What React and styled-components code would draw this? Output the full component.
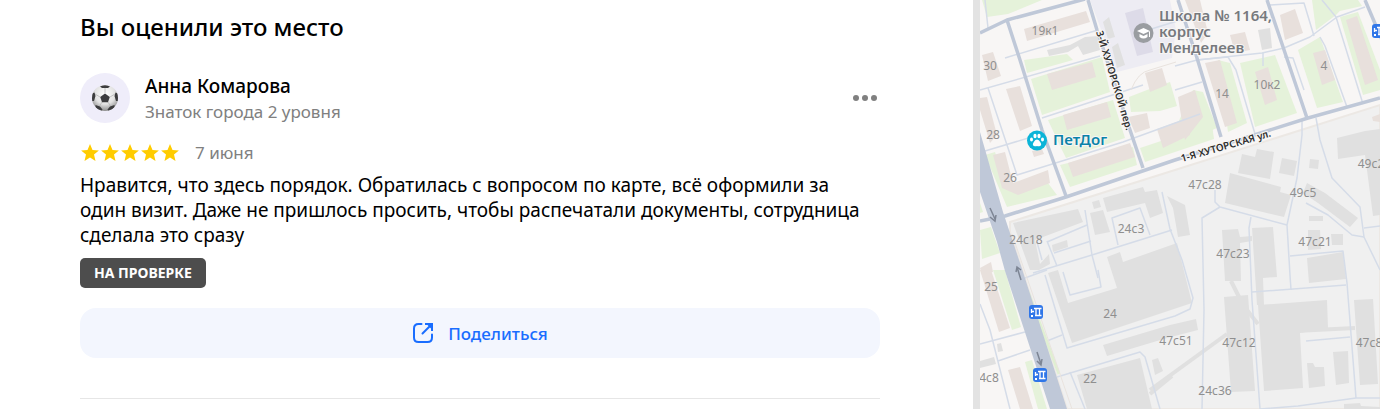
import React from 'react';
import styled, { createGlobalStyle } from 'styled-components';

const review = {
  author: 'Анна Комарова',
  level: 'Знаток города 2 уровня',
  date: '7 июня',
  rating: 5,
  text: 'Нравится, что здесь порядок. Обратилась с вопросом по карте, всё оформили за один визит. Даже не пришлось просить, чтобы распечатали документы, сотрудница сделала это сразу',
  status: 'На проверке',
};

// map shapes, grouped by fill
const greens = [
  '982,0 1042,0 1008,14 987,17',
  '1024,60 1067,54 1073,60 1027,73',
  '1031,79 1102,57 1110,92 1042,115',
  '1048,120 1113,100 1125,138 1066,158 1060,146',
  '1129,97 1147,90 1170,82 1177,106 1160,111 1131,112',
  '985,155 995,152 1007,188 1048,183 1057,195 1007,207',
  '1060,165 1133,147 1137,165 1070,187',
  '1140,148 1212,124 1214,139 1145,162',
  '1193,90 1203,92 1217,128 1176,145 1172,136',
  '1218,60 1230,63 1247,123 1228,132',
  '1240,63 1275,55 1297,113 1255,127',
  '1298,50 1320,37 1343,102 1317,108',
  '1340,17 1358,12 1380,70 1380,90 1363,95',
  '1312,0 1335,0 1350,0 1336,15 1316,30',
  '1338,0 1358,0 1362,6 1340,11',
  '980,230 991,227 1000,253 982,259',
  '993,270 1005,270 1021,327 1012,330',
  '1025,362 1032,360 1047,409 1038,409',
  '980,203 983,212 980,213',
];

const houses = [
  '1024,29 1086,11 1090,22 1027,41',
  '982,55 993,52 1001,76 988,81',
  '980,98 987,97 997,135 990,143 980,110',
  '1006,89 1020,86 1032,126 1020,131',
  '1047,74 1092,62 1096,77 1052,90',
  '1063,115 1107,102 1111,117 1067,130',
  '1128,117 1147,113 1150,128 1135,133',
  '1145,73 1162,68 1167,85 1150,92',
  '1157,129 1185,119 1190,135 1163,148',
  '993,155 1005,152 1013,183 1048,170 1050,183 1018,195 1002,188',
  '1032,151 1042,149 1044,154 1034,157',
  '1068,163 1130,143 1135,157 1073,177',
  '1178,97 1195,90 1203,117 1185,140',
  '1185,0 1200,0 1208,33 1201,43',
  '1230,35 1245,32 1250,50 1235,53',
  '1205,63 1220,60 1237,123 1225,127',
  '1255,72 1268,67 1277,100 1265,105',
  '1280,15 1295,9 1303,33 1285,40',
  '1313,53 1325,50 1335,80 1322,85',
  '1346,20 1357,16 1378,80 1365,85',
  '1372,117 1380,114 1380,122 1373,121',
  '980,270 991,270 1010,328 999,332',
  '1008,370 1020,367 1033,409 1020,409',
  '980,268 991,262 993,272 982,275',
];

const greys = [
  '1047,50 1070,45 1085,37 1098,36 1100,50 1083,55 1078,46 1068,52 1049,56',
  '1103,22 1109,17 1115,37 1108,39',
  '1112,47 1118,43 1125,65 1117,68',
  '1258,30 1270,28 1272,48 1262,50',
  '1013,223 1078,209 1083,222 1035,240 1040,264 1049,254 1050,264 1039,270 1030,270',
  '1090,213 1103,210 1110,232 1095,235',
  '1092,202 1099,200 1101,207 1094,209',
  '1103,198 1143,187 1145,192 1157,190 1163,213 1150,218 1145,203 1107,212',
  '1052,245 1067,240 1068,247 1053,252',
  '1048,273 1058,270 1068,303 1117,288 1107,257 1120,252 1123,262 1177,243 1192,303 1072,343',
  '1077,375 1140,358 1152,409 1087,409',
  '1103,345 1170,325 1196,319 1198,330 1167,338 1107,356',
  '1152,360 1158,358 1163,371 1155,375',
  '1242,154 1255,157 1257,149 1274,152 1270,179 1238,173',
  '1282,158 1297,161 1294,176 1279,173',
  '1310,159 1319,160 1318,169 1309,168',
  '1230,173 1281,187 1280,192 1291,195 1284,217 1225,203',
  '1307,183 1325,193 1358,218 1350,227 1318,203 1303,193',
  '1337,138 1365,131 1380,129 1380,215 1373,216 1365,155 1338,159',
  '1167,196 1185,205 1190,235 1178,237 1173,208',
  '1222,230 1238,229 1240,237 1252,236 1252,241 1240,243 1241,281 1225,281',
  '1252,228 1273,227 1277,277 1263,278 1264,305 1257,305',
  '1308,230 1320,230 1321,249 1308,250',
  '1331,234 1343,234 1343,245 1332,245',
  '1309,216 1323,216 1323,221 1309,221',
  '1307,258 1343,252 1346,279 1309,283',
  '1224,297 1248,295 1255,391 1231,392',
  '1258,305 1327,300 1328,328 1300,333 1303,388 1264,391',
  '1307,363 1313,363 1315,367 1324,367 1325,386 1309,388',
  '1333,352 1348,351 1349,383 1336,385',
  '1354,300 1373,299 1378,384 1360,385',
  '1344,404 1360,403 1361,406 1380,407 1380,409 1344,409',
  '980,361 994,357 996,364 980,368',
  '997,344 1001,343 1003,351 998,352',
];

const strips = [
  '1150,390 1227,334',
  '1231,281 1243,305 1258,324',
  '1275,332 1355,328',
  '1150,394 1172,376',
];

const lanes = [
  '1005,58 1098,30',
  '980,90 1100,56',
  '988,88 1003,133 1017,175 1123,142 1200,114',
  '1042,118 1143,85',
  '985,151 1045,133',
  '985,0 988,28',
  '1148,30 1200,14',
  '1175,66 1197,60 1228,57 1236,70 1255,134',
  '1197,60 1262,53 1284,48 1310,37 1337,17 1365,7',
  '1322,0 1336,17 1363,104',
  '1320,37 1325,46 1347,107',
  '1270,5 1304,3 1314,36',
  '1284,57 1293,58 1304,90',
  '1175,90 1202,82',
  '1263,53 1263,66',
  '1302,120 1302,135 1297,178 1287,225 1290,275',
  '1316,118 1320,140 1332,178 1360,207 1364,237 1380,270',
  '1085,210 1092,255 1098,278',
  '1033,273 1092,255 1172,230',
  '1047,242 1087,225',
  '1037,242 1042,260',
  '1063,272 1070,295 1101,287 1098,270',
  '1054,253 1091,241',
  '1047,241 1057,266',
  '1118,245 1112,218 1140,208 1150,235',
  '1162,192 1170,229 1182,260 1193,298 1190,309 1175,316 1067,348 1045,275',
  '1025,278 1047,270',
  '1047,341 1062,335',
  '1057,377 1140,352 1145,357 1160,409',
  '1070,372 1085,409',
  '1215,190 1215,202 1220,207 1287,225',
  '1220,207 1202,218 1204,310 1202,409',
  '1251,217 1249,228 1252,300 1260,409',
  '1306,203 1328,215 1352,235 1364,237',
  '1364,228 1380,226',
  '1290,256 1343,251 1347,283 1356,398',
  '1252,292 1346,285',
  '1290,275 1291,290',
  '1306,341 1350,337',
  '1260,409 1298,406 1356,398 1380,398',
  '980,344 1025,332',
  '998,361 1030,350',
  '980,304 990,330 1010,409',
];

const streets = [
  '980,33 1007,20 1085,-1',
  '1007,20 1020,60 1042,130 1066,196',
  '980,221 1005,216 1066,197 1175,160 1308,118 1380,98',
  '1088,0 1097,30 1130,130 1143,168',
  '1178,0 1197,58 1221,137',
  '1267,0 1280,38 1307,118',
  '1365,0 1382,40',
];

const houseNumbers = [
  ['19к1', 1045, 35], ['30', 990, 70], ['28', 993, 139], ['26', 1010, 182],
  ['14', 1222, 98], ['10к2', 1267, 89], ['4', 1324, 70], ['47с28', 1205, 189],
  ['49с5', 1303, 197], ['49с2', 1371, 168], ['24с3', 1131, 233], ['24с18', 1026, 244],
  ['47с21', 1315, 246], ['47с23', 1233, 258], ['25', 991, 291], ['24', 1110, 318],
  ['47с51', 1176, 345], ['47с12', 1239, 347], ['47с8', 1369, 347], ['4с8', 989, 382],
  ['22', 1090, 383], ['24с36', 1215, 395],
];

const stops = [[1029, 305], [1033, 368], [1372, 24]];

const Star = () => (
  <svg width="20" height="20" viewBox="0 0 20 20" aria-hidden="true">
    <path
      fill="#ffcc00"
      d="M10 1 12.5 6.900l6.400.5-4.900 4.200 1.500 6.300L10 14.500l-5.500 3.400L6 11.600 1.100 7.400l6.400-.5z"
    />
  </svg>
);

const Ball = () => (
  <svg width="28" height="28" viewBox="0 0 28 28" role="img" aria-label="Аватар">
    <defs>
      <radialGradient id="ball" cx="50%" cy="35%" r="65%">
        <stop offset="0" stopColor="#ffffff" />
        <stop offset="0.6" stopColor="#e2e2e2" />
        <stop offset="1" stopColor="#8d8d8d" />
      </radialGradient>
      <clipPath id="ballEdge">
        <circle cx="14" cy="14" r="13" />
      </clipPath>
    </defs>
    <circle cx="14" cy="14" r="13" fill="url(#ball)" />
    <g clipPath="url(#ballEdge)">
      <path
        d="M14 9V4M9 13 4 10M19 13l5-3M11 18l-3 5M17 18l3 5"
        fill="none"
        stroke="#b5b5b5"
        strokeWidth="0.8"
      />
      <g fill="#3c3c3e">
        <path d="M14 9.5 18.8 13 17 18.2h-6L9.2 13z" />
        <path d="M9 2.5Q14 0 19 2.5L17 4h-6z" />
        <path d="M0 10l3.5-1.5L4.5 12 3 17H0z" />
        <path d="M28 10l-3.5-1.5L23.5 12l1.5 5h3z" />
        <path d="M4.5 21 9 22.5l2.5 3L10 28H4z" />
        <path d="M23.5 21 19 22.5l-2.5 3L18 28h6z" />
      </g>
    </g>
  </svg>
);

const ShareIcon = () => (
  <svg width="22" height="22" viewBox="0 0 22 22" fill="none" stroke="#196dff" strokeWidth="2" aria-hidden="true">
    <path d="M9.5 2H6.5Q2 2 2 6.5v9Q2 20 6.5 20h9q4.5 0 4.5-4.5V12.5" strokeLinecap="round" />
    <path d="M10.5 11.5 18.5 3.5" strokeLinecap="round" />
    <path d="M13 2h7v7" />
    <path d="M15 2.5h4.5V7z" fill="#196dff" stroke="none" />
  </svg>
);

const CityMap = () => (
  <MapSvg viewBox="980 0 400 409" preserveAspectRatio="xMinYMin slice" role="img" aria-label="Карта">
    <rect x="980" y="0" width="400" height="409" fill="#f8f6f5" />
    <polygon points="1090,0 1170,0 1176,30 1172,58 1117,72" fill="#edecf3" />
    <path d="M1010 222 1175 170 1380 105V409H1067L1010 232z" fill="#f0f0f0" stroke="#ece8e4" strokeWidth="2" />
    {greens.map((p) => <polygon key={p} points={p} fill="#e5f2da" />)}
    {houses.map((p) => <polygon key={p} points={p} fill="#e8e0dc" />)}
    {greys.map((p) => <polygon key={p} points={p} fill="#e0e0e0" />)}
    <polygon points="1125,13 1143,8 1153,52 1137,56" fill="#dddbe8" />
    <g fill="none" strokeLinejoin="round">
      {strips.map((p) => <polyline key={p} points={p} stroke="#e0e0e0" strokeWidth="4" />)}
      {lanes.map((p) => <polyline key={p} points={p} stroke="#d5dce8" strokeWidth="1.5" />)}
      {streets.map((p) => <polyline key={p} points={p} stroke="#bfc8d8" strokeWidth="3.5" />)}
      <path d="M1028 292 1059 374" stroke="#e0efd2" strokeWidth="3" />
      <path d="M1012 234 1072 409M1131 90Q1138 72 1150 70L1176 62" stroke="#e9e3de" />
    </g>
    <polygon points="980,132 1003,212 1023,272 1067,409 1050,409 1005,271 997,242 980,192" fill="#bfc8d8" />
    <g fill="none" stroke="#7d8594" strokeWidth="1.5">
      <path d="M990 208 995 219M990 217l5 4 1-6" />
      <path d="M1021 280 1017 267M1016 272l1-5 4 3" />
      <path d="M1037 352 1041 364M1037 361l4 4 1-6" />
    </g>
    {houseNumbers.map(([label, x, y]) => <HouseNumber key={label} x={x} y={y}>{label}</HouseNumber>)}
    <StreetName transform="translate(1096 32) rotate(73)">3-Й ХУТОРСКОЙ пер.</StreetName>
    <StreetName transform="translate(1182 162) rotate(-16)">1-Я ХУТОРСКАЯ ул.</StreetName>

    <circle cx="1143.5" cy="33" r="10" fill="#9a9da1" />
    <path d="m1137 31 6.5-3 6.5 3-6.5 3zM1139.5 34v3q4 3 8 0v-3l-4 2zM1149 31.5h1V37h-1z" fill="#fff" />
    <Place x="1159" y="21">Школа № 1164,</Place>
    <Place x="1159" y="37">корпус</Place>
    <Place x="1159" y="53">Менделеев</Place>

    <circle cx="1037" cy="140.5" r="10" fill="#0bb4d8" />
    <g fill="#fff">
      <ellipse cx="1031.5" cy="139.5" rx="1.5" ry="2" />
      <ellipse cx="1035" cy="136" rx="1.6" ry="2.2" />
      <ellipse cx="1039" cy="136" rx="1.6" ry="2.2" />
      <ellipse cx="1042.5" cy="139.5" rx="1.5" ry="2" />
      <path d="M1037 139.5q2 0 3.5 3t-.5 3.5q-1.5.5-3 0-1.5.5-3 0-2-.5-.5-3.5t3.5-3z" />
    </g>
    <Place x="1053" y="145" $accent>ПетДог</Place>

    {stops.map(([x, y]) => (
      <g key={y} transform={`translate(${x} ${y})`}>
        <rect width="14" height="14" rx="3" fill="#2f76e8" />
        <path
          d="M5 3.5h7.5M7 3.5V10M10.5 3.5V10M6 10.5h6.5M2.5 4v4M2 6.5h3"
          stroke="#fff"
          strokeWidth="1.3"
          fill="none"
        />
        <rect x="2" y="10" width="2" height="2" fill="#fff" />
      </g>
    ))}
  </MapSvg>
);

const App = () => {
  return (
    <>
      <GlobalStyle />
      <Page>
        <Panel>
          <Title>Вы оценили это место</Title>
          <Review>
            <Header>
              <Avatar><Ball /></Avatar>
              <Author>
                <h2>{review.author}</h2>
                <p>{review.level}</p>
              </Author>
              <MoreButton type="button" aria-label="Ещё">
                <span />
                <span />
                <span />
              </MoreButton>
            </Header>
            <Rating>
              <Stars role="img" aria-label="Оценка 5 из 5">
                {Array.from({ length: review.rating }, (_, i) => <Star key={i} />)}
              </Stars>
              <time>{review.date}</time>
            </Rating>
            <ReviewText>{review.text}</ReviewText>
            <Status>{review.status}</Status>
          </Review>
          <ShareButton type="button">
            <ShareIcon />
            Поделиться
          </ShareButton>
          <Divider />
        </Panel>
        <MapPane>
          <CityMap />
        </MapPane>
      </Page>
    </>
  );
};

const GlobalStyle = createGlobalStyle`
  * {
    box-sizing: border-box;
  }
  body {
    margin: 0;
    background: #fff;
    color: #000;
    font-family: 'Noto Sans', 'Open Sans', sans-serif;
  }
  h1, h2, p {
    margin: 0;
  }
  button {
    padding: 0;
    border: 0;
    font: inherit;
    cursor: pointer;
  }
`;
const Page = styled.div`
  display: flex;
  min-height: 100vh;
`;
const Panel = styled.main`
  flex: 1;
  min-width: 0;
  padding: 11px 93px 0 80px;
`;
const Title = styled.h1`
  font-size: 24px;
  font-weight: 500;
  line-height: 32px;
`;
const Review = styled.article`
  display: flex;
  flex-direction: column;
  align-items: flex-start;
  padding-top: 29px;
`;
const Header = styled.header`
  display: flex;
  align-items: center;
  align-self: stretch;
  gap: 15px;
`;
const Avatar = styled.div`
  display: flex;
  align-items: center;
  justify-content: center;
  width: 50px;
  height: 50px;
  border-radius: 50%;
  background: #efedfa;
`;
const Author = styled.div`
  flex: 1;
  h2 {
    font-size: 19px;
    font-weight: 500;
    line-height: 28px;
  }
  p {
    color: #808080;
    font-size: 17px;
    line-height: 24px;
  }
`;
const MoreButton = styled.button`
  display: flex;
  align-items: center;
  gap: 3px;
  height: 30px;
  margin-right: 3px;
  background: none;
  span {
    width: 6px;
    height: 6px;
    border-radius: 50%;
    background: #808080;
  }
`;
const Rating = styled.div`
  display: flex;
  align-items: center;
  gap: 15px;
  padding-top: 16px;
  time {
    color: #808080;
    font-size: 17px;
    line-height: 26px;
  }
`;
const Stars = styled.div`
  display: flex;
`;
const ReviewText = styled.p`
  padding-top: 7px;
  font-size: 19px;
  line-height: 25px;
`;
const Status = styled.span`
  margin-top: 10px;
  padding: 0 14px;
  border-radius: 5px;
  background: #4d4d4d;
  color: #fff;
  font-size: 14px;
  font-weight: 700;
  line-height: 30px;
  text-transform: uppercase;
`;
const ShareButton = styled.button`
  display: flex;
  align-items: center;
  justify-content: center;
  gap: 14px;
  width: 100%;
  height: 50px;
  margin-top: 20px;
  border-radius: 16px;
  background: #f3f6fe;
  color: #196dff;
  && {
    font-size: 17px;
    font-weight: 500;
  }
`;
const Divider = styled.hr`
  margin: 40px 0 0;
  border: 0;
  border-top: 1px solid #e6e6e6;
`;
const MapPane = styled.aside`
  display: flex;
  flex: 0 0 407px;
  border-left: 7px solid #e3e3e3;
`;
const MapSvg = styled.svg`
  display: block;
  width: 100%;
  font-family: 'Noto Sans', 'Open Sans', sans-serif;
`;
const HouseNumber = styled.text`
  fill: #8f8f8f;
  font-size: 12px;
  text-anchor: middle;
`;
const StreetName = styled.text`
  fill: #2e2e2e;
  stroke: #f8f6f5;
  stroke-width: 2px;
  paint-order: stroke;
  font-size: 10px;
  font-weight: 600;
`;
const Place = styled.text`
  fill: ${(props) => (props.$accent ? '#0a83a8' : '#76797d')};
  stroke: #f8f6f5;
  stroke-width: 2px;
  paint-order: stroke;
  font-size: 15px;
  font-weight: 600;
`;

export default App;
